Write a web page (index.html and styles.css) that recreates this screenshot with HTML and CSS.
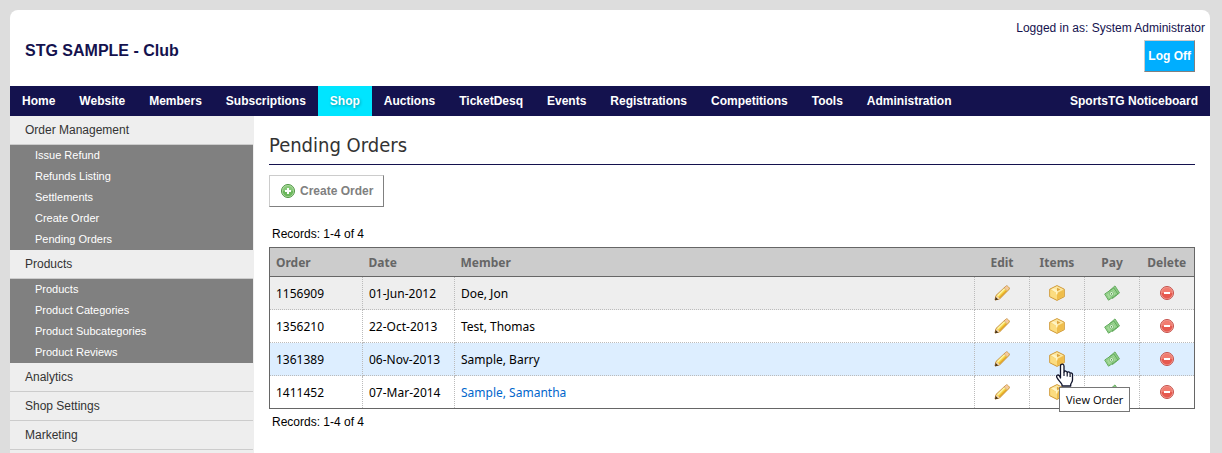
FILE: index.html
```html
<!DOCTYPE html>
<html lang="en">
<head>
    <meta charset="UTF-8">
    <meta name="viewport" content="width=device-width, initial-scale=1.0">
    <title>Pending Orders</title>
    <link rel="stylesheet" href="styles.css">
</head>
<body>
    <!-- Shared icons -->
    <svg class="sprite" aria-hidden="true">
        <symbol id="icon-add" viewBox="0 0 16 16">
            <circle cx="8" cy="8" r="6.5" fill="#b5e0a6" stroke="#4c9341"/>
            <circle cx="8" cy="8" r="5.2" fill="#86c878"/>
            <path d="M2.800 8a5.200 5.200 0 0 0 10.400 0z" fill="#6bb75c"/>
            <path d="M7 5h2v2h2v2H9v2H7V9H5V7h2z" fill="#fff"/>
        </symbol>
        <symbol id="icon-edit" viewBox="0 0 16 16">
            <path d="M1 15l1-4.500L11.500 1.500c1-.8 1.600-.8 2.400 0l.8.8c.8.8.8 1.500 0 2.400L5.500 14z" fill="#f7d84a" stroke="#c08334"/>
            <path d="M3.500 10.800l7.500-7.500" stroke="#fdf3a6" stroke-width="1.600"/>
            <path d="M5 13l7.600-7.600" stroke="#e5a82b" stroke-width="1.300"/>
            <path d="M1.500 14.500l1-4 3.300 3.200z" fill="#f2d6ae"/>
            <path d="M1 15.200l.7-3.300 2.600 2.500z" fill="#40301a"/>
            <path d="M10.500 2.800l1.300-1.200c.8-.6 1.200-.6 1.800 0l.8.8c.6.6.6 1.100 0 1.800l-1.200 1.300z" fill="#f5c8a0"/>
            <path d="M10.200 2.900l3 3" stroke="#d9b98c"/>
        </symbol>
        <symbol id="icon-box" viewBox="0 0 16 16">
            <path d="M8 .6l7.300 3.600v7.500L8 15.400.7 11.700V4.200z" fill="#f5cf69" stroke="#d09a3a"/>
            <path d="M8 1.300l6.500 3.200L8 8 1.500 4.500z" fill="#fbe7a3"/>
            <path d="M1.300 4.900L8 8.200v6.400l-6.700-3.300z" fill="#fbdc80"/>
            <path d="M14.700 4.900L8 8.200v6.400l6.700-3.300z" fill="#efbd4b"/>
            <path d="M2.700 4.500L4.700 3.500 8.500 5.500v3.700L7 9.500V7.500z" fill="#fff4c4"/>
            <path d="M8 2.800v3.400l3.600-1.800z" fill="#dfa640"/>
        </symbol>
        <symbol id="icon-pay" viewBox="0 0 16 16">
            <path d="M4.500 6.500L11 .9l4.500 7-7 5.600z" fill="#8ccb83" stroke="#6bae65"/>
            <path d="M.7 9L9.800 3l4 6-9.300 6.200z" fill="#a4da99" stroke="#62aa5d"/>
            <path d="M2.300 9.400l7-4.600 2.900 4.200-7.400 5z" fill="none" stroke="#82c47a" stroke-width=".7"/>
            <ellipse cx="7.500" cy="8.800" rx="1.900" ry="2.200" fill="#e0f5da" stroke="#5aa555" stroke-width=".6"/>
            <path d="M7.500 8v1.600" stroke="#5aa555"/>
        </symbol>
        <symbol id="icon-delete" viewBox="0 0 16 16">
            <circle cx="8" cy="8" r="6.500" fill="#f6a39a" stroke="#c4504a"/>
            <circle cx="8" cy="8" r="5.400" fill="#f17c70"/>
            <path d="M2.600 8a5.400 5.400 0 0 0 10.800 0z" fill="#e6594f"/>
            <path d="M5 7h6v2H5z" fill="#fff"/>
        </symbol>
    </svg>

    <div class="page">
        <header class="header">
            <div class="club-name">STG SAMPLE - Club</div>
            <div class="user">
                <div class="user-name">Logged in as: System Administrator</div>
                <button class="log-off" type="button">Log Off</button>
            </div>
        </header>

        <nav class="nav">
            <a href="#">Home</a>
            <a href="#">Website</a>
            <a href="#">Members</a>
            <a href="#">Subscriptions</a>
            <a href="#" class="active">Shop</a>
            <a href="#">Auctions</a>
            <a href="#">TicketDesq</a>
            <a href="#">Events</a>
            <a href="#">Registrations</a>
            <a href="#">Competitions</a>
            <a href="#">Tools</a>
            <a href="#">Administration</a>
            <a href="#" class="noticeboard">SportsTG Noticeboard</a>
        </nav>

        <div class="content">
            <aside class="sidebar">
                <a href="#" class="section">Order Management</a>
                <div class="submenu">
                    <a href="#">Issue Refund</a>
                    <a href="#">Refunds Listing</a>
                    <a href="#">Settlements</a>
                    <a href="#">Create Order</a>
                    <a href="#">Pending Orders</a>
                </div>
                <a href="#" class="section">Products</a>
                <div class="submenu">
                    <a href="#">Products</a>
                    <a href="#">Product Categories</a>
                    <a href="#">Product Subcategories</a>
                    <a href="#">Product Reviews</a>
                </div>
                <a href="#" class="section">Analytics</a>
                <a href="#" class="section">Shop Settings</a>
                <a href="#" class="section">Marketing</a>
            </aside>

            <main class="main">
                <h1>Pending Orders</h1>
                <button class="create-order" type="button">
                    <svg class="icon"><use href="#icon-add"/></svg>
                    Create Order
                </button>

                <div class="records">Records: 1-4 of 4</div>
                <table class="orders">
                    <thead>
                        <tr>
                            <th class="col-order">Order</th>
                            <th class="col-date">Date</th>
                            <th>Member</th>
                            <th class="col-action">Edit</th>
                            <th class="col-action">Items</th>
                            <th class="col-action">Pay</th>
                            <th class="col-action">Delete</th>
                        </tr>
                    </thead>
                    <tbody>
                        <tr class="odd">
                            <td>1156909</td>
                            <td>01-Jun-2012</td>
                            <td>Doe, Jon</td>
                            <td class="action"><a href="#" aria-label="Edit"><svg class="icon"><use href="#icon-edit"/></svg></a></td>
                            <td class="action"><a href="#" aria-label="Items"><svg class="icon"><use href="#icon-box"/></svg></a></td>
                            <td class="action"><a href="#" aria-label="Pay"><svg class="icon"><use href="#icon-pay"/></svg></a></td>
                            <td class="action"><a href="#" aria-label="Delete"><svg class="icon"><use href="#icon-delete"/></svg></a></td>
                        </tr>
                        <tr>
                            <td>1356210</td>
                            <td>22-Oct-2013</td>
                            <td>Test, Thomas</td>
                            <td class="action"><a href="#" aria-label="Edit"><svg class="icon"><use href="#icon-edit"/></svg></a></td>
                            <td class="action"><a href="#" aria-label="Items"><svg class="icon"><use href="#icon-box"/></svg></a></td>
                            <td class="action"><a href="#" aria-label="Pay"><svg class="icon"><use href="#icon-pay"/></svg></a></td>
                            <td class="action"><a href="#" aria-label="Delete"><svg class="icon"><use href="#icon-delete"/></svg></a></td>
                        </tr>
                        <tr class="hovered">
                            <td>1361389</td>
                            <td>06-Nov-2013</td>
                            <td>Sample, Barry</td>
                            <td class="action"><a href="#" aria-label="Edit"><svg class="icon"><use href="#icon-edit"/></svg></a></td>
                            <td class="action">
                                <a href="#" class="with-tip" aria-label="Items">
                                    <svg class="icon"><use href="#icon-box"/></svg>
                                    <svg class="pointer" viewBox="0 0 18 26">
                                        <path d="M4.500 15V3c0-2.500 3.500-2.500 3.500 0v6c.5-1.500 3-1.300 3.200.6.700-1.300 2.700-1 2.900.7.900-.9 2.400-.2 2.400 1.300V17c0 2-1.500 3-1.800 4.500V23H6v-1.500C4.500 19 2 17 .9 14.500c-.9-2 1-3.300 2.500-1.800z" fill="#fff" stroke="#10142c" stroke-width="1.300" stroke-linejoin="round"/>
                                        <path d="M8 9v4M11.200 10v3.500M14.100 11v3" stroke="#10142c" stroke-width="1.200"/>
                                    </svg>
                                    <span class="tooltip" role="tooltip">View Order</span>
                                </a>
                            </td>
                            <td class="action"><a href="#" aria-label="Pay"><svg class="icon"><use href="#icon-pay"/></svg></a></td>
                            <td class="action"><a href="#" aria-label="Delete"><svg class="icon"><use href="#icon-delete"/></svg></a></td>
                        </tr>
                        <tr>
                            <td>1411452</td>
                            <td>07-Mar-2014</td>
                            <td><a href="#">Sample, Samantha</a></td>
                            <td class="action"><a href="#" aria-label="Edit"><svg class="icon"><use href="#icon-edit"/></svg></a></td>
                            <td class="action"><a href="#" aria-label="Items"><svg class="icon"><use href="#icon-box"/></svg></a></td>
                            <td class="action"><a href="#" aria-label="Pay"><svg class="icon"><use href="#icon-pay"/></svg></a></td>
                            <td class="action"><a href="#" aria-label="Delete"><svg class="icon"><use href="#icon-delete"/></svg></a></td>
                        </tr>
                    </tbody>
                </table>
                <div class="records">Records: 1-4 of 4</div>
            </main>
        </div>
    </div>
</body>
</html>
```
FILE: styles.css
```css
* {
    box-sizing: border-box;
}
body {
    margin: 0;
    background-color: #ddd;
    font-family: "Liberation Sans", Arial, sans-serif;
    font-size: 12px;
    color: #000;
}
a {
    text-decoration: none;
}
.sprite {
    display: none;
}
.icon {
    display: block;
    width: 16px;
    height: 16px;
}
.page {
    display: flex;
    flex-direction: column;
    min-height: 100vh;
    padding: 10px 12px 0 10px;
}

/* Header */
.header {
    display: flex;
    justify-content: space-between;
    align-items: flex-start;
    height: 76px;
    background: #fff;
    border-radius: 8px 8px 0 0;
    color: #14124e;
}
.club-name {
    padding: 31px 15px 0;
    font-size: 16px;
    line-height: 20px;
    font-weight: bold;
}
.user {
    display: flex;
    flex-direction: column;
    align-items: flex-end;
    padding: 10px 5px 0 0;
}
.user-name {
    line-height: 16px;
}
.log-off {
    height: 32px;
    margin: 4px 10px 0 0;
    padding: 0 3px;
    background: #00aeff;
    border: 1px solid;
    border-color: #ccc #808080 #808080 #ccc;
    color: #fff;
    font: bold 12px "Liberation Sans", Arial, sans-serif;
}

/* Top menu */
.nav {
    display: flex;
    background: #14124e;
}
.nav a {
    padding: 0 12px;
    line-height: 30px;
    font-weight: bold;
    color: #fff;
    white-space: nowrap;
}
.nav a.active {
    background: #00e5ff;
    text-shadow: 1px 1px 3px rgba(0,0,0,0.3);
}
.nav .noticeboard {
    margin-left: auto;
}

.content {
    display: flex;
    flex: 1;
    background: #fff;
}

/* Left menu */
.sidebar {
    flex: 0 0 244px;
    background: #eee;
    border-right: 1px solid #eee;
}
.section {
    display: block;
    padding-left: 15px;
    line-height: 28px;
    border-bottom: 1px solid #ccc;
    color: #333;
}
.submenu {
    background: #808080;
}
.submenu a {
    display: block;
    padding-left: 25px;
    font-size: 11px;
    line-height: 21px;
    color: #fff;
}

/* Orders */
.main {
    flex: 1;
    padding: 15px;
}
h1 {
    margin: 0 0 10px;
    padding-bottom: 5px;
    border-bottom: 1px solid #14124e;
    font-family: "DejaVu Sans Condensed", "Open Sans", sans-serif;
    font-size: 20px;
    line-height: 28px;
    font-weight: normal;
    color: #333;
}
.create-order {
    display: flex;
    align-items: center;
    gap: 4px;
    height: 32px;
    margin-bottom: 18px;
    padding: 0 10px;
    background: #fff;
    border: 1px solid;
    border-color: #ccc #808080 #808080 #ccc;
    color: #808080;
    font: bold 12px "Liberation Sans", Arial, sans-serif;
}
.records {
    padding: 0 3px;
    line-height: 18px;
}
.orders {
    width: 100%;
    margin: 4px 0;
    table-layout: fixed;
    border-collapse: collapse;
    border: 1px solid #666;
    font-family: "Noto Sans", sans-serif;
    line-height: 16px;
}
.orders th {
    height: 29px;
    padding: 2px 6px 0;
    background: #ccc;
    border-bottom: 1px solid #666;
    text-align: left;
    color: #666;
}
.orders .col-order {
    width: 93px;
}
.orders .col-date {
    width: 92px;
}
.orders .col-action {
    width: 55px;
    padding: 2px 0 0;
    text-align: center;
}
.orders td {
    height: 33px;
    padding: 2px 6px 0;
    border: 1px dotted #bbb;
}
.orders tr:last-child td {
    border-bottom: 1px solid #666;
}
.orders td:first-child {
    border-left: 1px solid #666;
}
.orders td:last-child {
    border-right: 1px solid #666;
}
.orders tbody tr:first-child td {
    border-top: 1px solid #666;
}
.orders td a {
    color: #0066cc;
}
.orders .odd {
    background: #eee;
}
.orders .hovered {
    background: #def;
}
.orders .action {
    padding: 0;
}
.action a {
    display: block;
    width: 16px;
    margin: 0 auto;
}

/* Tooltip under the mouse pointer */
.with-tip {
    position: relative;
}
.pointer {
    position: absolute;
    top: 12px;
    left: 7px;
    z-index: 1;
    width: 18px;
    height: 26px;
}
.orders .tooltip {
    position: absolute;
    top: 36px;
    left: 10px;
    z-index: 2;
    padding: 2px 6px;
    background: #fff;
    border: 1px solid #767676;
    font-family: "Open Sans", sans-serif;
    font-size: 11px;
    line-height: 19px;
    white-space: nowrap;
    color: #000;
}
```
